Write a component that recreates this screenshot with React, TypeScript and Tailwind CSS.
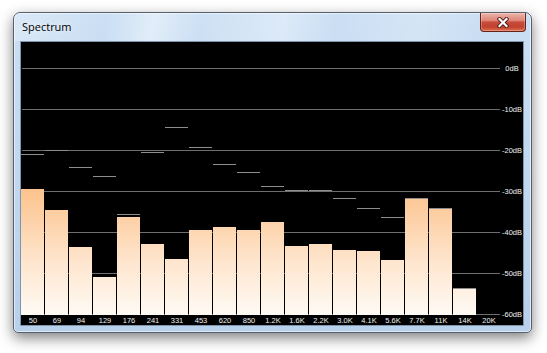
import React from 'react';

/** One frequency band: label, top of the bar (page px) and peak-hold line (page px) */
interface Band {
  label: string;
  top: number | null;
  peak: number | null;
}

const BANDS: Band[] = [
  { label: '50', top: 189, peak: 154 },
  { label: '69', top: 210, peak: 150 },
  { label: '94', top: 247, peak: 167 },
  { label: '129', top: 277, peak: 176 },
  { label: '176', top: 217, peak: 214 },
  { label: '241', top: 244, peak: 152 },
  { label: '331', top: 259, peak: 127 },
  { label: '453', top: 230, peak: 147 },
  { label: '620', top: 227, peak: 164 },
  { label: '850', top: 230, peak: 172 },
  { label: '1.2K', top: 222, peak: 186 },
  { label: '1.6K', top: 246, peak: 190 },
  { label: '2.2K', top: 244, peak: 190 },
  { label: '3.0K', top: 250, peak: 198 },
  { label: '4.1K', top: 251, peak: 208 },
  { label: '5.6K', top: 260, peak: 217 },
  { label: '7.7K', top: 199, peak: 198 },
  { label: '11K', top: 209, peak: 208 },
  { label: '14K', top: 289, peak: 288 },
  { label: '20K', top: null, peak: null },
];

const DB_LABELS = ['0dB', '-10dB', '-20dB', '-30dB', '-40dB', '-50dB', '-60dB'];

// plot area starts at page y=42, bars end at page y=315
const OFFSET_Y = 42;
const BOTTOM = 315;

function SpectrumChart() {
  return (
    <svg width={502} height={273} className="block overflow-visible" style={{ fontFamily: '"Liberation Sans", Arial, sans-serif' }}>
      <defs>
        <linearGradient id="barFill" gradientUnits="userSpaceOnUse" x1="0" y1="273" x2="0" y2="26">
          <stop offset="0" stopColor="#fffaf5" />
          <stop offset="0.2" stopColor="#fee7d1" />
          <stop offset="0.5" stopColor="#fcc48f" />
          <stop offset="1" stopColor="#f9ab64" />
        </linearGradient>
      </defs>

      {/* dB grid */}
      {DB_LABELS.map((_, i) => {
        const y = 26 + i * 41 + 0.5;
        return <line key={i} x1={1} x2={479} y1={y} y2={y} stroke="#6e6e6e" strokeWidth={1} />;
      })}

      {/* bars */}
      {BANDS.map((b, i) =>
        b.top === null ? null : (
          <rect key={i} x={i * 24} y={b.top - OFFSET_Y} width={23} height={BOTTOM - b.top} fill="url(#barFill)" />
        ),
      )}

      {/* peak hold lines */}
      {BANDS.map((b, i) =>
        b.peak === null ? null : (
          <rect key={i} x={i * 24} y={b.peak - OFFSET_Y} width={23} height={1} fill="#8e8e8e" />
        ),
      )}

      {/* dB labels */}
      {DB_LABELS.map((t, i) => (
        <text
          key={t}
          x={491}
          y={26 + i * 41 + 0.5}
          fontSize={7.5}
          fill="#f0f0f0"
          textAnchor="middle"
          dominantBaseline="central"
        >
          {t}
        </text>
      ))}
    </svg>
  );
}

function CloseButton() {
  return (
    <div className="flex h-[19px] w-[46px] items-center justify-center rounded-b-[4px] border border-t-0 border-[#6a2118] bg-[linear-gradient(to_bottom,#ebb5aa_0%,#de8576_42%,#c74d3d_50%,#c2402e_78%,#dd7452_100%)] shadow-[inset_0_0_0_1px_rgba(255,255,255,0.25)]">
      <svg width="12" height="11" viewBox="0 0 12 11">
        <path d="M2.5 2 L9.5 9 M9.5 2 L2.5 9" stroke="#4f1a14" strokeWidth="4" strokeLinecap="square" />
        <path d="M2.5 2 L9.5 9 M9.5 2 L2.5 9" stroke="#ffffff" strokeWidth="2.2" strokeLinecap="square" />
      </svg>
    </div>
  );
}

export default function App() {
  return (
    <div className="h-[353px] w-[547px] overflow-hidden bg-white pl-[13px] pt-[12px]">
      <div className="flex h-[321px] w-[519px] flex-col overflow-hidden rounded-t-[7px] rounded-b-[5px] border border-[#56606c] bg-[linear-gradient(to_bottom,#cbdff4,#b7d0eb)] shadow-[0_5px_14px_rgba(0,0,0,0.5),inset_0_0_0_1px_rgba(255,255,255,0.55)]">
        {/* title bar */}
        <div className="flex h-[28px] items-start justify-between bg-[linear-gradient(100deg,rgba(255,255,255,0.3)_0%,rgba(255,255,255,0)_18%,rgba(255,255,255,0.45)_27%,rgba(255,255,255,0.05)_36%,rgba(255,255,255,0.35)_52%,rgba(255,255,255,0)_62%,rgba(255,255,255,0.2)_78%,rgba(255,255,255,0)_90%)] pl-[8px] pr-[5px]">
          <span className="pt-[7px] font-['Open_Sans',sans-serif] text-[11px] leading-[14px] text-black [text-shadow:0_0_6px_rgba(255,255,255,0.95)]">
            Spectrum
          </span>
          <CloseButton />
        </div>

        {/* client area */}
        <div className="flex pl-[6px] pr-[6px]">
          <div className="h-[285px] w-[504px] border border-[#7f95ae] bg-black">
            <SpectrumChart />
            <div className="grid grid-cols-[repeat(20,24px)] pt-[2px] font-['Liberation_Sans',Arial,sans-serif] text-[7.5px] leading-[8px] text-[#f2f2f2]">
              {BANDS.map((b) => (
                <span key={b.label} className="text-center">
                  {b.label}
                </span>
              ))}
            </div>
          </div>
        </div>
      </div>
    </div>
  );
}
